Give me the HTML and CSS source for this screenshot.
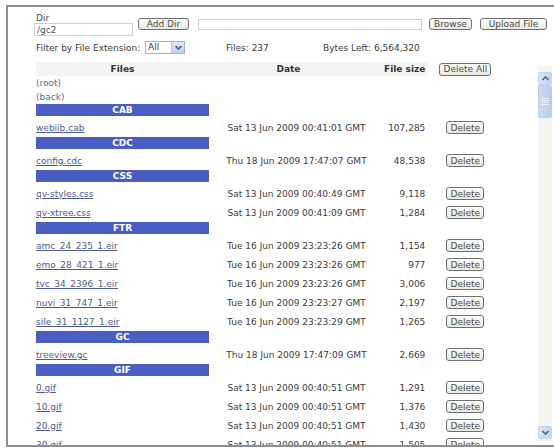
FILE: index.html
```html
<html>

<head>
  <title>File Manager</title>
  <link rel="stylesheet" href="styles.css">
</head>

<body>
  <div id="frame">

    <form class="upload">
      <div class="dir">
        <label>Dir</label>
        <input type="text" class="dir-input" value="/gc2">
      </div>
      <button type="button" class="btn add-dir">Add Dir</button>
      <input type="text" class="file-input">
      <button type="button" class="btn browse">Browse</button>
      <button type="button" class="btn upload-btn">Upload File</button>
    </form>

    <div class="filter">
      <span class="filter-label">Filter by File Extension:</span>
      <span class="select">
        <span class="select-value">All</span>
        <span class="select-arrow">
          <svg width="9" height="9" viewBox="0 0 9 9"><path d="M1.5 3 L4.5 6 L7.5 3" fill="none" stroke="#4d6185" stroke-width="1.6"/></svg>
        </span>
      </span>
      <span class="count">Files: 237</span>
      <span class="bytes">Bytes Left: 6,564,320</span>
    </div>

    <div class="browser">
      <div class="list">
        <table class="files">
          <tr class="head">
            <th class="c-name">Files</th>
            <th class="c-date">Date</th>
            <th class="c-size">File size</th>
            <th class="c-del"><button type="button" class="btn del-all">Delete All</button></th>
          </tr>
          <tr class="nav"><td><a class="up">(root)</a></td><td></td><td></td><td></td></tr>
          <tr class="nav"><td><a class="up">(back)</a></td><td></td><td></td><td></td></tr>

          <tr class="group"><td><div class="bar">CAB</div></td><td></td><td></td><td></td></tr>
          <tr class="file"><td><a href="#">webiib.cab</a></td><td class="c-date">Sat 13 Jun 2009 00:41:01 GMT</td><td class="c-size">107,285</td><td class="c-del"><button type="button" class="btn del">Delete</button></td></tr>

          <tr class="group"><td><div class="bar">CDC</div></td><td></td><td></td><td></td></tr>
          <tr class="file"><td><a href="#">config.cdc</a></td><td class="c-date">Thu 18 Jun 2009 17:47:07 GMT</td><td class="c-size">48,538</td><td class="c-del"><button type="button" class="btn del">Delete</button></td></tr>

          <tr class="group"><td><div class="bar">CSS</div></td><td></td><td></td><td></td></tr>
          <tr class="file"><td><a href="#">qv-styles.css</a></td><td class="c-date">Sat 13 Jun 2009 00:40:49 GMT</td><td class="c-size">9,118</td><td class="c-del"><button type="button" class="btn del">Delete</button></td></tr>
          <tr class="file"><td><a href="#">qv-xtree.css</a></td><td class="c-date">Sat 13 Jun 2009 00:41:09 GMT</td><td class="c-size">1,284</td><td class="c-del"><button type="button" class="btn del">Delete</button></td></tr>

          <tr class="group"><td><div class="bar">FTR</div></td><td></td><td></td><td></td></tr>
          <tr class="file"><td><a href="#">amc_24_235_1.eir</a></td><td class="c-date">Tue 16 Jun 2009 23:23:26 GMT</td><td class="c-size">1,154</td><td class="c-del"><button type="button" class="btn del">Delete</button></td></tr>
          <tr class="file"><td><a href="#">emo_28_421_1.eir</a></td><td class="c-date">Tue 16 Jun 2009 23:23:26 GMT</td><td class="c-size">977</td><td class="c-del"><button type="button" class="btn del">Delete</button></td></tr>
          <tr class="file"><td><a href="#">tvc_34_2396_1.eir</a></td><td class="c-date">Tue 16 Jun 2009 23:23:26 GMT</td><td class="c-size">3,006</td><td class="c-del"><button type="button" class="btn del">Delete</button></td></tr>
          <tr class="file"><td><a href="#">nuvi_31_747_1.eir</a></td><td class="c-date">Tue 16 Jun 2009 23:23:27 GMT</td><td class="c-size">2,197</td><td class="c-del"><button type="button" class="btn del">Delete</button></td></tr>
          <tr class="file"><td><a href="#">sile_31_1127_1.eir</a></td><td class="c-date">Tue 16 Jun 2009 23:23:29 GMT</td><td class="c-size">1,265</td><td class="c-del"><button type="button" class="btn del">Delete</button></td></tr>

          <tr class="group"><td><div class="bar">GC</div></td><td></td><td></td><td></td></tr>
          <tr class="file"><td><a href="#">treeview.gc</a></td><td class="c-date">Thu 18 Jun 2009 17:47:09 GMT</td><td class="c-size">2,669</td><td class="c-del"><button type="button" class="btn del">Delete</button></td></tr>

          <tr class="group"><td><div class="bar">GIF</div></td><td></td><td></td><td></td></tr>
          <tr class="file"><td><a href="#">0.gif</a></td><td class="c-date">Sat 13 Jun 2009 00:40:51 GMT</td><td class="c-size">1,291</td><td class="c-del"><button type="button" class="btn del">Delete</button></td></tr>
          <tr class="file"><td><a href="#">10.gif</a></td><td class="c-date">Sat 13 Jun 2009 00:40:51 GMT</td><td class="c-size">1,376</td><td class="c-del"><button type="button" class="btn del">Delete</button></td></tr>
          <tr class="file"><td><a href="#">20.gif</a></td><td class="c-date">Sat 13 Jun 2009 00:40:51 GMT</td><td class="c-size">1,430</td><td class="c-del"><button type="button" class="btn del">Delete</button></td></tr>
          <tr class="file"><td><a href="#">30.gif</a></td><td class="c-date">Sat 13 Jun 2009 00:40:51 GMT</td><td class="c-size">1,505</td><td class="c-del"><button type="button" class="btn del">Delete</button></td></tr>
        </table>
      </div>

      <div class="scrollbar">
        <div class="sb-btn">
          <svg width="9" height="7" viewBox="0 0 9 7"><path d="M1.5 5 L4.5 2 L7.5 5" fill="none" stroke="#4d6185" stroke-width="1.6"/></svg>
        </div>
        <div class="sb-thumb">
          <span></span><span></span><span></span><span></span>
        </div>
        <div class="sb-track"></div>
        <div class="sb-btn">
          <svg width="9" height="7" viewBox="0 0 9 7"><path d="M1.5 2 L4.5 5 L7.5 2" fill="none" stroke="#4d6185" stroke-width="1.6"/></svg>
        </div>
      </div>
    </div>

  </div>
</body>

</html>
```

FILE: styles.css
```css
body {
  margin: 0;
  background: #fff;
  font-family: "DejaVu Sans", Verdana, sans-serif;
  font-size: 9px;
  color: #3c3c3c;
  overflow: hidden;
}

#frame {
  margin: 5px 0 0 6px;
  width: 546px;
  height: 438px;
  border: 2px solid #8e8e8e;
  border-right: 0;
  overflow: hidden;
}

/* top form */

.upload {
  display: flex;
  align-items: flex-start;
  margin: 7px 0 0 26px;
}

.dir label {
  display: block;
  height: 9px;
  line-height: 9px;
  margin-left: 2px;
  color: #444;
}

input {
  box-sizing: border-box;
  margin: 0;
  padding: 0 2px;
  border: 1px solid #cfcfcf;
  font-family: inherit;
  font-size: 9px;
  color: #555;
  background: #fff;
}

.dir-input {
  width: 99px;
  height: 13px;
}

.file-input {
  width: 224px;
  height: 11px;
  margin: 5px 0 0 9px;
}

.btn {
  box-sizing: border-box;
  height: 12px;
  padding: 0;
  border: 1px solid #6e6e6e;
  border-radius: 3px;
  background: linear-gradient(#fdfdfb, #e9e9e2);
  font-family: inherit;
  font-size: 9px;
  line-height: 10px;
  color: #4a4a4a;
}

.add-dir {
  width: 51px;
  margin: 4px 0 0 5px;
}

.browse {
  width: 43px;
  margin: 4px 0 0 7px;
}

.upload-btn {
  width: 67px;
  margin: 4px 0 0 8px;
}

.filter {
  display: flex;
  align-items: center;
  height: 13px;
  margin: 5px 0 0 28px;
}

.filter-label {
  width: 109px;
}

.select {
  box-sizing: border-box;
  display: flex;
  width: 40px;
  height: 13px;
  border: 1px solid #9fb2cc;
  background: #fff;
}

.select-value {
  flex: 1;
  padding-left: 2px;
  line-height: 11px;
}

.select-arrow {
  display: flex;
  align-items: center;
  justify-content: center;
  width: 12px;
  background: linear-gradient(#dfe8f8, #bfcff0);
  border-left: 1px solid #b8c8e6;
}

.count {
  width: 97px;
  margin-left: 41px;
}

/* file list */

.browser {
  display: flex;
  margin-top: 8px;
}

.list {
  flex: 1;
  padding-left: 28px;
}

.files {
  border-collapse: collapse;
  font-size: 9px;
  color: #3c3c3c;
}

.files td,
.files th {
  padding: 0;
  white-space: nowrap;
}

.head th {
  height: 14px;
  font-weight: bold;
  color: #333;
  background: #f4f4f4;
}

.head th.c-del {
  background: #fff;
}

.c-name {
  width: 173px;
}

.c-date {
  width: 175px;
  text-align: center;
}

.head .c-date {
  padding-right: 16px;
  width: 159px;
}

.c-size {
  width: 39px;
  text-align: right;
}

.files td.c-size,
.files th.c-size {
  padding-right: 3px;
}

.c-del {
  width: 74px;
  text-align: center;
}

.nav td {
  height: 14px;
}

a {
  color: #4e5b8e;
}

a.up {
  color: #5c6890;
  text-decoration: none;
}

.group td {
  height: 14px;
  vertical-align: top;
}

.bar {
  height: 12px;
  line-height: 12px;
  background: #4a5dc2;
  color: #fff;
  font-weight: bold;
  text-align: center;
}

.file td {
  height: 19px;
}

.del {
  width: 38px;
  height: 13px;
}

.del-all {
  width: 52px;
  height: 13px;
}

/* scrollbar */

.scrollbar {
  display: flex;
  flex-direction: column;
  width: 14px;
  height: 375px;
  margin: 4px 2px 0 0;
  background: #f6f6f1;
}

.sb-btn {
  display: flex;
  align-items: center;
  justify-content: center;
  height: 11px;
  margin-top: 6px;
  border: 1px solid #c4d2ea;
  border-radius: 2px;
  background: linear-gradient(90deg, #d9e4f6, #c3d3f0);
}

.sb-btn:last-child {
  margin: 0 0 2px;
}

.sb-thumb {
  display: flex;
  flex-direction: column;
  justify-content: center;
  align-items: center;
  gap: 1px;
  height: 31px;
  border: 1px solid #bccdea;
  border-radius: 2px;
  background: linear-gradient(90deg, #cddbf4, #b8cbef);
}

.sb-thumb span {
  width: 7px;
  height: 1px;
  background: #eef3fc;
}

.sb-track {
  flex: 1;
}
```
